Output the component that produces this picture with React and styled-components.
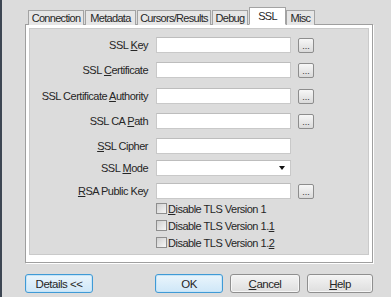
import React from 'react'
import styled, { createGlobalStyle } from 'styled-components'

const Global = createGlobalStyle`
  body {
    margin: 0;
    background: #dcdcdc;
    font-family: "Liberation Sans", Arial, sans-serif;
    font-size: 11px;
    letter-spacing: -0.5px;
    color: #262626;
  }
`

let Page = styled.div`
  display: flex;
  height: 297px;
  overflow: hidden;
`
let Edge = styled.div`
  width: 2px;
  background: #3d4653;
`
let Main = styled.div`
  flex: 1;
  padding: 7px 18px 0 23px;
  display: flex;
  flex-direction: column;
`
let TabBar = styled.div`
  display: flex;
  align-items: flex-end;
  height: 18px;
  padding-left: 3px;
  position: relative;
  z-index: 1;
`
let Tab = styled.div`
  width: ${p => p.$w}px;
  height: ${p => p.$active ? '18px' : '15px'};
  box-sizing: border-box;
  padding-top: ${p => p.$active ? '2px' : '1px'};
  margin-right: ${p => p.$active ? '0' : '1px'};
  border: 1px solid #a3a3a3;
  border-bottom: ${p => p.$active ? '1px solid #fff' : 'none'};
  background: ${p => p.$active ? '#fff' : '#e6e6e6'};
  line-height: 12px;
  letter-spacing: -0.7px;
  text-align: center;
  white-space: nowrap;
  overflow: hidden;
`
let Panel = styled.div`
  height: 239px;
  margin-top: -1px;
  box-sizing: border-box;
  border: 1px solid #9f9f9f;
  box-shadow: 1px 1px 0 #fff;
  background: #fff;
  padding: 3px 3px 7px 3px;
  display: flex;
`
let Inner = styled.div`
  flex: 1;
  border: 1px solid #cacaca;
  background: #dcdcdc;
  padding-top: 8px;
`
let Row = styled.div`
  display: flex;
  align-items: center;
  height: 16px;
  margin-top: ${p => p.$top || 0}px;
`
let Label = styled.div`
  width: 118px;
  margin-right: 8px;
  text-align: right;
  white-space: nowrap;
`
let Field = styled.div`
  width: 135px;
  height: 16px;
  box-sizing: border-box;
  border: 1px solid #c9c9c9;
  border-top-color: #bdbdbd;
  background: #fff;
  display: flex;
  align-items: center;
  justify-content: flex-end;
  padding-right: 5px;
`
let Arrow = styled.div`
  width: 0;
  height: 0;
  border-left: 3px solid transparent;
  border-right: 3px solid transparent;
  border-top: 4px solid #111;
`
let Browse = styled.div`
  width: 16px;
  height: 15px;
  margin-left: 7px;
  box-sizing: border-box;
  border: 1px solid #8d8d8d;
  border-radius: 2px;
  background: linear-gradient(#f7f7f7, #dadada);
  font-size: 9px;
  letter-spacing: 0;
  line-height: 15px;
  text-align: center;
  color: #333;
`
let CheckRow = styled.label`
  display: flex;
  align-items: center;
  height: 17px;
  margin-left: 126px;
  margin-top: ${p => p.$top || 0}px;
`
let Box = styled.span`
  width: 11px;
  height: 11px;
  box-sizing: border-box;
  border: 1px solid #8e8e8e;
  background: linear-gradient(135deg, #d0d0d0, #f6f6f6);
  margin-right: 1px;
`
let U = styled.span`
  text-decoration: underline;
  text-underline-offset: 1px;
`
let Buttons = styled.div`
  display: flex;
  justify-content: space-between;
  margin-top: 11px;
`
let Group = styled.div`
  display: flex;
  gap: 7px;
`
let Button = styled.div`
  width: ${p => p.$w || 68}px;
  height: 19px;
  box-sizing: border-box;
  border: 1px solid ${p => p.$primary ? '#3f9ad6' : '#8f8f8f'};
  border-radius: 3px;
  background: ${p => p.$primary
    ? 'linear-gradient(#eaf5fc, #cfe7f8)'
    : 'linear-gradient(#f4f4f4, #dedede)'};
  box-shadow: inset 0 0 0 1px ${p => p.$primary ? '#c6e4f7' : '#f6f6f6'};
  display: flex;
  align-items: center;
  justify-content: center;
  font-size: 11.5px;
`

const tabs = [
  { name: 'Connection', w: 56 },
  { name: 'Metadata', w: 51 },
  { name: 'Cursors/Results', w: 74 },
  { name: 'Debug', w: 36 },
  { name: 'SSL', w: 37, active: true },
  { name: 'Misc', w: 29 },
]

const fields = [
  { label: <>SSL <U>K</U>ey</>, top: 0, browse: true },
  { label: <>SSL <U>C</U>ertificate</>, top: 9, browse: true },
  { label: <>SSL Certificate <U>A</U>uthority</>, top: 10, browse: true },
  { label: <>SSL CA <U>P</U>ath</>, top: 9, browse: true },
  { label: <><U>S</U>SL Cipher</>, top: 9 },
  { label: <>SSL <U>M</U>ode</>, top: 6, select: true },
  { label: <><U>R</U>SA Public Key</>, top: 7, browse: true },
]

const checks = [
  <><U>D</U>isable TLS Version 1</>,
  <>Disable TLS Version 1.<U>1</U></>,
  <>Disable TLS Version 1.<U>2</U></>,
]

export default function App() {
  return (
    <Page>
      <Global />
      <Edge />
      <Main>
        <TabBar>
          {tabs.map(t => <Tab key={t.name} $w={t.w} $active={t.active}>{t.name}</Tab>)}
        </TabBar>
        <Panel>
          <Inner>
            {fields.map((f, i) => (
              <Row key={i} $top={f.top}>
                <Label>{f.label}</Label>
                <Field>{f.select && <Arrow />}</Field>
                {f.browse && <Browse>...</Browse>}
              </Row>
            ))}
            {checks.map((c, i) => (
              <CheckRow key={i} $top={i === 0 ? 1 : 0}>
                <Box />
                {c}
              </CheckRow>
            ))}
          </Inner>
        </Panel>
        <Buttons>
          <Button $primary>Details &lt;&lt;</Button>
          <Group>
            <Button $primary>OK</Button>
            <Button $w={70}><U>C</U>ancel</Button>
            <Button $w={66}><U>H</U>elp</Button>
          </Group>
        </Buttons>
      </Main>
    </Page>
  )
}
